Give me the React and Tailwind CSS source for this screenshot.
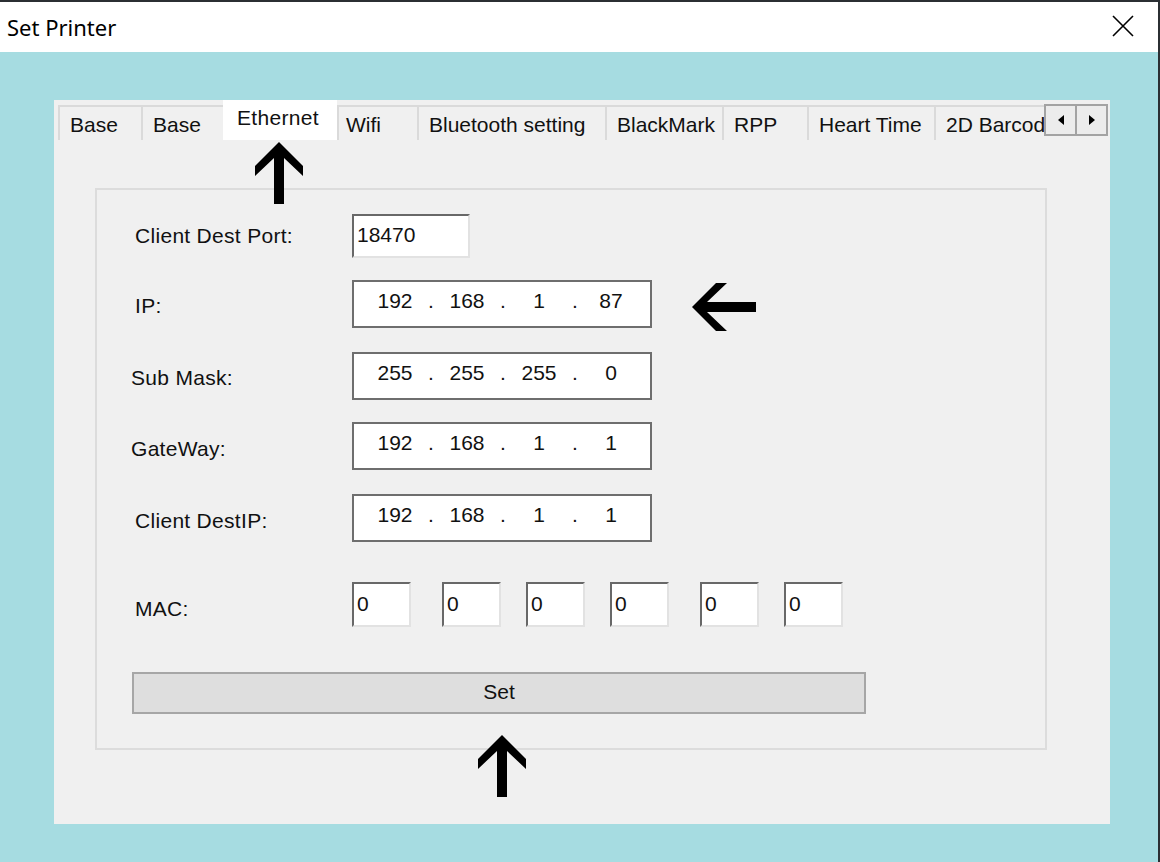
import React from "react";

const FONT = { fontFamily: '"Liberation Sans", Arial, sans-serif' };

function Tab({ label, w, selected, pl = 10 }) {
  if (selected) {
    return (
      <div
        className="relative z-10 h-[40px] shrink-0 self-start bg-white pl-[14px] pt-[6px] text-[21px] leading-[24px] tracking-[0.3px] text-[#111]"
        style={{ width: w }}
      >
        {label}
      </div>
    );
  }
  return (
    <div
      className="h-[35px] shrink-0 overflow-hidden whitespace-nowrap border-l-2 border-t-2 border-[#dadada] pt-[6px] text-[21px] leading-[24px] text-[#111]"
      style={{ width: w, paddingLeft: pl }}
    >
      {label}
    </div>
  );
}

function IpBox({ parts }) {
  const cells = [];
  parts.forEach((p, i) => {
    cells.push(
      <div key={"o" + i} className="w-[54px] text-center">
        {p}
      </div>
    );
    if (i < 3)
      cells.push(
        <div key={"d" + i} className="w-[18px] text-center">
          .
        </div>
      );
  });
  return (
    <div className="flex h-[48px] w-[300px] items-center border-2 border-[#6e6e6e] bg-white pb-[6px] pl-[14px] text-[21px] text-[#111]">
      {cells}
    </div>
  );
}

function Sunken({ w, h, value }) {
  return (
    <div
      className="flex items-center border-2 border-b-[#e2e2e2] border-l-[#686868] border-r-[#e2e2e2] border-t-[#686868] bg-white pl-[3px] pb-[2px] text-[21px] text-[#111]"
      style={{ width: w, height: h }}
    >
      {value}
    </div>
  );
}

function Row({ label, lx, mt, h, ly = 0, children }) {
  return (
    <div className="flex items-center" style={{ marginTop: mt, height: h }}>
      <div
        className="w-[255px] text-[21px] tracking-[0.3px] text-[#111]"
        style={{ paddingLeft: lx, paddingTop: ly }}
      >
        {label}
      </div>
      {children}
    </div>
  );
}

function UpArrow() {
  return (
    <svg width="48" height="62" viewBox="0 0 48 62">
      <path d="M24 0 L48 24 L48 34 L29 16 L29 62 L19 62 L19 16 L0 34 L0 24 Z" fill="#000" />
    </svg>
  );
}

function LeftArrow() {
  return (
    <svg width="64" height="48" viewBox="0 0 64 48">
      <path d="M0 24 L24 0 L35 0 L15 19 L64 19 L64 29 L15 29 L35 48 L24 48 Z" fill="#000" />
    </svg>
  );
}

export default function App() {
  const tabs = [
    ["Base", 83],
    ["Base", 82],
    ["Ethernet", 114, true],
    ["Wifi", 80, false, 7],
    ["Bluetooth setting", 188],
    ["BlackMark", 117],
    ["RPP", 85],
    ["Heart Time", 127],
    ["2D Barcode", 130],
  ];
  return (
    <div className="flex h-[862px] w-[1160px] overflow-hidden bg-[#2b2f33]" style={FONT}>
      <div className="mt-[2px] flex w-[1158px] flex-col">
        {/* title bar */}
        <div className="flex h-[50px] items-center justify-between bg-white pl-[7px] pr-[24px]">
          <div
            className="pt-[1px] text-[22px] text-[#000]"
            style={{ fontFamily: '"Noto Sans", "Open Sans", sans-serif' }}
          >
            Set Printer
          </div>
          <svg width="22" height="22" viewBox="0 0 22 22" className="mb-[2px]">
            <path d="M1 1 L21 21 M21 1 L1 21" stroke="#000" strokeWidth="1.6" />
          </svg>
        </div>
        {/* teal client area */}
        <div className="flex-1 bg-[#a6dce1] pl-[54px] pt-[48px]">
          <div className="relative flex h-[724px] w-[1056px] flex-col bg-[#f0f0f0]">
            {/* tab strip */}
            <div className="relative flex h-[40px] items-end overflow-hidden pl-[4px]">
              {tabs.map(([l, w, s, pl], i) => (
                <Tab key={i} label={l} w={w} selected={s} pl={pl} />
              ))}
              <div className="absolute left-[990px] top-[4px] flex h-[32px] w-[64px] border-2 border-[#a3a3a3] bg-[#ececec]">
                <div className="flex flex-1 items-center justify-center border-r-2 border-[#a3a3a3]">
                  <svg width="6" height="10" viewBox="0 0 6 10">
                    <path d="M6 0 L0 5 L6 10 Z" fill="#000" />
                  </svg>
                </div>
                <div className="flex flex-1 items-center justify-center">
                  <svg width="6" height="10" viewBox="0 0 6 10">
                    <path d="M0 0 L6 5 L0 10 Z" fill="#000" />
                  </svg>
                </div>
              </div>
            </div>

            {/* group box */}
            <div className="ml-[41px] mt-[48px] flex h-[562px] w-[952px] flex-col border-2 border-[#dcdcdc] pt-[24px]">
              <Row label="Client Dest Port:" lx={38} mt={0} h={44}>
                <Sunken w={118} h={44} value="18470" />
              </Row>
              <Row label="IP:" lx={38} mt={22} h={48} ly={4}>
                <IpBox parts={["192", "168", "1", "87"]} />
              </Row>
              <Row label="Sub Mask:" lx={34} mt={24} h={48} ly={4}>
                <IpBox parts={["255", "255", "255", "0"]} />
              </Row>
              <Row label="GateWay:" lx={34} mt={22} h={48} ly={6}>
                <IpBox parts={["192", "168", "1", "1"]} />
              </Row>
              <Row label="Client DestIP:" lx={38} mt={24} h={48} ly={6}>
                <IpBox parts={["192", "168", "1", "1"]} />
              </Row>
              <Row label="MAC:" lx={38} mt={40} h={45} ly={8}>
                <div className="flex">
                  <Sunken w={59} h={45} value="0" />
                  <div className="ml-[31px]">
                    <Sunken w={59} h={45} value="0" />
                  </div>
                  <div className="ml-[25px]">
                    <Sunken w={59} h={45} value="0" />
                  </div>
                  <div className="ml-[25px]">
                    <Sunken w={59} h={45} value="0" />
                  </div>
                  <div className="ml-[31px]">
                    <Sunken w={59} h={45} value="0" />
                  </div>
                  <div className="ml-[25px]">
                    <Sunken w={59} h={45} value="0" />
                  </div>
                </div>
              </Row>
              <div className="ml-[35px] mt-[45px] flex h-[42px] w-[734px] items-center justify-center border-2 border-[#a6a6a6] bg-[#dedede] pb-[2px] text-[21px] text-[#111]">
                Set
              </div>
            </div>

            {/* annotation arrows */}
            <div className="absolute left-[201px] top-[42px]">
              <UpArrow />
            </div>
            <div className="absolute left-[638px] top-[183px]">
              <LeftArrow />
            </div>
            <div className="absolute left-[424px] top-[635px]">
              <UpArrow />
            </div>
          </div>
        </div>
      </div>
    </div>
  );
}
